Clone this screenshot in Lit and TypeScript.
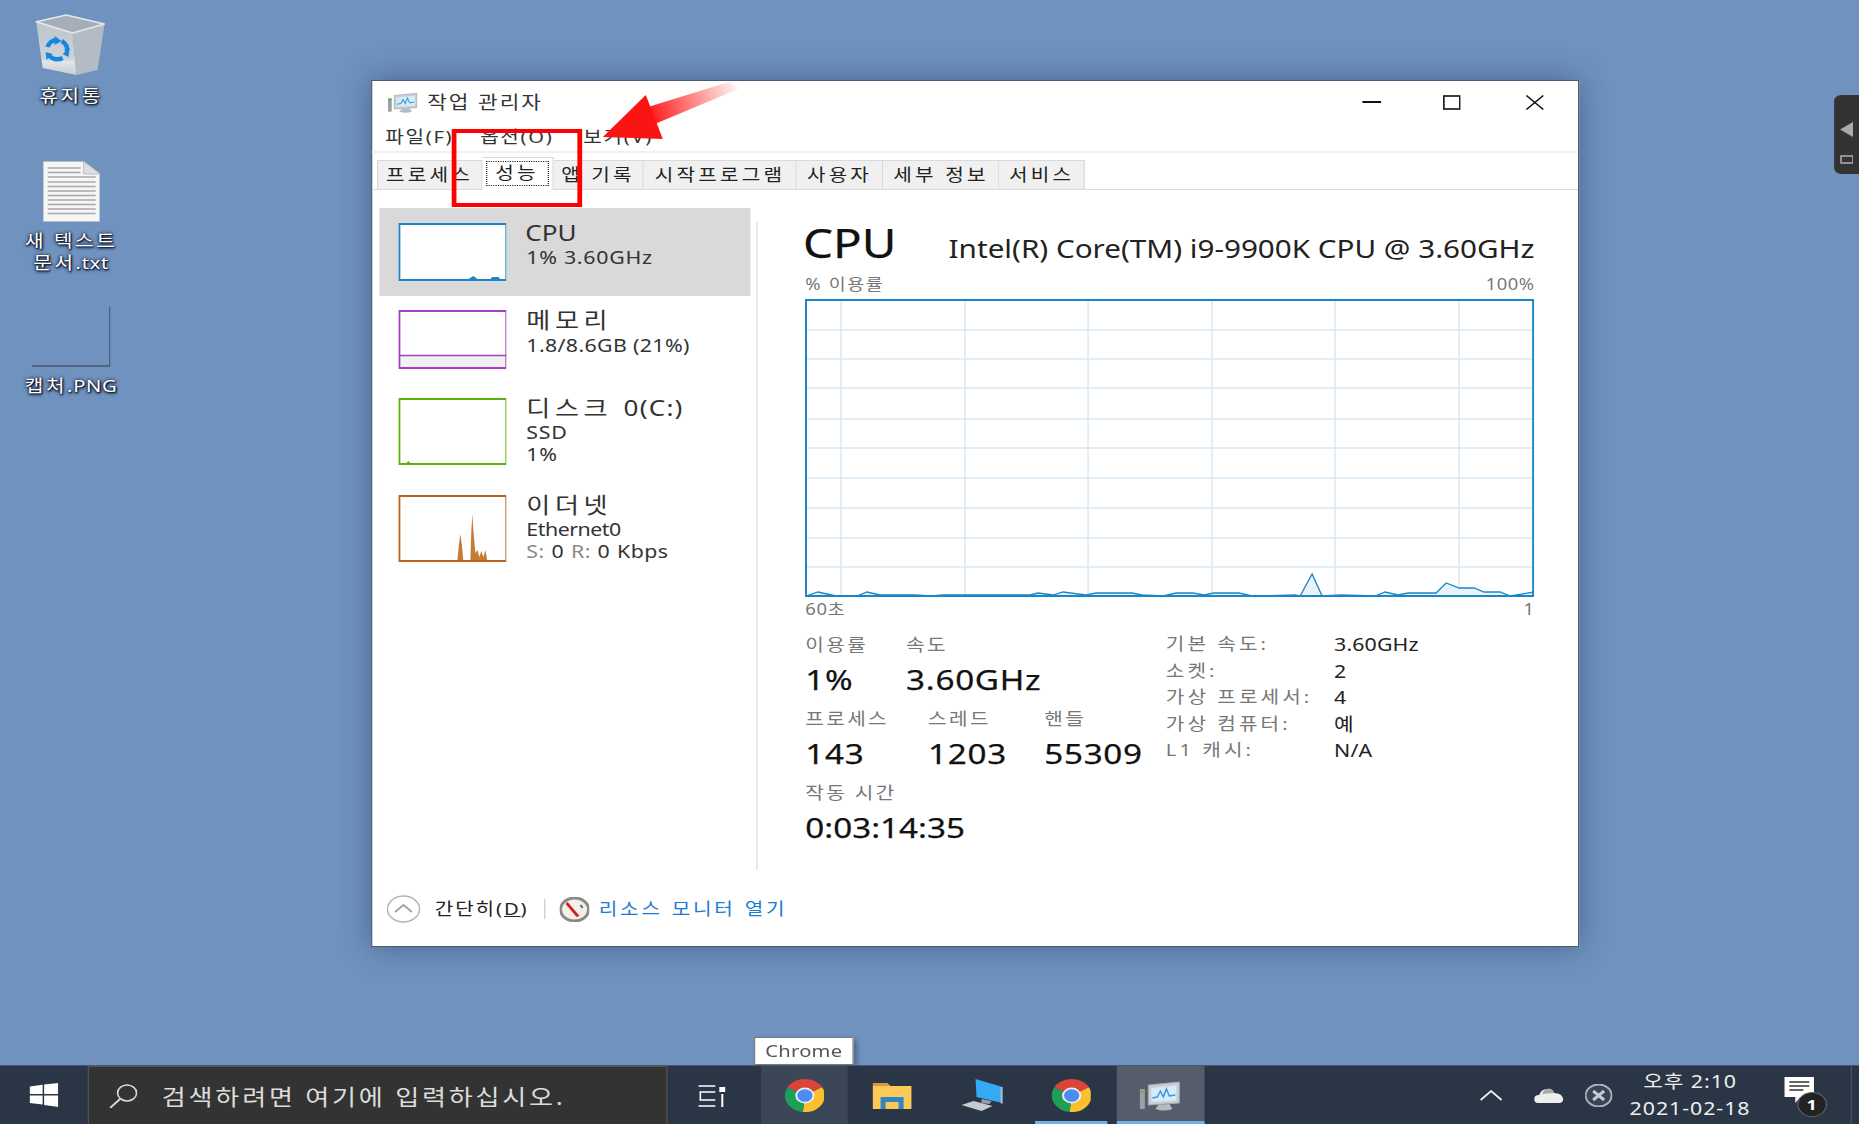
import { LitElement, html, css, svg } from "lit";
import { customElement } from "lit/decorators.js";

const K = 1859 / 1568;
const w = (real: number) => real / K;

const TABS = [
  { t: "프로세스", w: 88.5 },
  { t: "성능", w: 60, sel: true },
  { t: "앱 기록", w: 76.8 },
  { t: "시작프로그램", w: 129 },
  { t: "사용자", w: 72.6 },
  { t: "세부 정보", w: 98.5 },
  { t: "서비스", w: 71.5 },
];

const GRID_H = [330, 359, 388, 419, 448, 478, 508, 538, 567];
const GRID_V = [841, 965, 1088, 1212, 1335, 1459];
const CPU_PTS: [number, number][] = [
  [806, 596],[818, 592],[836, 596],[857, 596],[867, 592],[880, 595],[915, 595],[931, 596],[943, 595],
  [1030, 595],[1038, 593],[1053, 595],[1063, 592],[1086, 595],[1096, 593],[1132, 593],[1142, 595],
  [1163, 596],[1176, 593],[1193, 593],[1204, 595],[1214, 593],[1239, 593],[1252, 596],[1295, 595],
  [1300, 596],[1312, 574],[1322, 596],[1341, 595],[1375, 596],[1385, 592],[1398, 595],[1408, 593],
  [1436, 593],[1446, 583],[1459, 588],[1474, 588],[1484, 592],[1500, 592],[1510, 596],[1534, 592],
];
const ptStr = CPU_PTS.map((p) => p.join(",")).join(" ");

const chrome = () => svg`
  <path d="M20 20 L2.7 10 A20 20 0 0 1 37.3 10 Z" fill="#db4437"/>
  <path d="M20 20 L37.3 10 A20 20 0 0 1 18 40 Z" fill="#fbc02d"/>
  <path d="M20 20 L18 40 A20 20 0 0 1 2.7 10 Z" fill="#1e9e57"/>
  <circle cx="20" cy="20" r="9.6" fill="#e8eef8"/>
  <circle cx="20" cy="20" r="7.6" fill="#4d8bf0"/>`;

const monitor = () => svg`
  <rect x="0.5" y="9" width="5" height="20" fill="#9aa0a6"/>
  <rect x="1" y="10.5" width="4" height="2.5" fill="#6ab04c"/>
  <path d="M9 5 L40 2 L40 23 L9 25 Z" fill="#c9ced3" stroke="#a2a8ae" stroke-width="1"/>
  <path d="M12 8 L37 5.5 L37 20.5 L12 22 Z" fill="#d3ebfa"/>
  <path d="M13 18 L18 17 L21 11 L24 17 L27 9 L30 16 L36 15" fill="none" stroke="#3d93d6" stroke-width="1.4"/>
  <path d="M19 25 L30 24 L33 29 Q25 32 16 29 Z" fill="#b6bbc0"/>`;

@customElement("app-root")
export class AppRoot extends LitElement {
  static styles = css`
    :host {
      display: block;
      width: 1568px;
      height: 1124px;
      overflow: hidden;
      transform: scaleX(1.18559);
      transform-origin: 0 0;
      filter: blur(0.35px);
      font-family: "Noto Sans", "Noto Sans CJK KR", sans-serif;
      color: #1a1a1a;
    }
    svg { display: block; flex: none; }
    .stage { display: flex; flex-direction: column; width: 1568px; height: 1124px; }
    .desktop { position: relative; flex: 1; background: #6f92be; }

    .icons {
      position: absolute; left: 0; top: 14px; width: 120px;
      display: flex; flex-direction: column;
    }
    .dicon { height: 146.5px; display: flex; flex-direction: column; align-items: center; }
    .dlabel {
      margin-top: 8px; font-size: 17px; line-height: 22.5px; letter-spacing: 2.2px;
      color: #fff; text-align: center; white-space: nowrap;
      text-shadow: 1px 1px 1.5px #0c1424, 0 0 3px #101a30, 0 1px 3px #101a30;
    }
    .dlabel.top { margin-top: 9px; }
    .dlabel span { letter-spacing: 0.6px; }

    .window {
      position: absolute; left: 313px; top: 80px; width: 1019px; height: 867px;
      box-sizing: border-box; border: 1px solid #4a5a72; background: #fff;
      box-shadow: 0 0 26px rgba(25, 45, 80, 0.45);
      display: flex; flex-direction: column;
    }
    .titlebar { height: 42px; display: flex; align-items: center; padding-left: 12.5px; }
    .wtitle { margin-left: 8.5px; font-size: 18px; line-height: 24px; letter-spacing: 1.7px; color: #333; }
    .controls { margin-left: auto; padding-right: 28.5px; display: flex; align-items: center; }
    .controls .mx { margin: 0 55px 0 52.5px; }

    .menubar {
      height: 28px; border-bottom: 2px solid #f0f0f0; padding-left: 11px;
      display: grid; grid-template-columns: 80px 87px auto; align-items: center;
      font-size: 17px; letter-spacing: 1.4px; line-height: 24px; color: #333;
    }

    .tabs {
      height: 36px; border-bottom: 1px solid #d9d9d9; padding: 0 0 0 4px;
      display: flex; align-items: flex-end;
    }
    .tab {
      box-sizing: border-box; height: 29px; background: #f0f0f0;
      border: 1px solid #d9d9d9; border-left-width: 0; border-bottom: none;
      display: flex; align-items: center; justify-content: center;
      font-size: 17px; line-height: 22px; letter-spacing: 2.7px; color: #222; white-space: nowrap;
    }
    .tab:first-child { border-left-width: 1px; }
    .tab.sel { height: 33px; background: #fff; margin-bottom: -1px; position: relative; }
    .tab.sel span { border: 1px dotted #222; box-sizing: border-box; width: 53px; height: 25px; margin-top: -1px; text-align: center; }

    .body { flex: 1; display: flex; min-height: 0; }
    .side { margin: 18px 0 0 6px; width: 312.6px; flex: none; }
    .row { display: flex; padding: 9px 0 0 15.5px; gap: 16.5px; box-sizing: border-box; }
    .row.on { background: #d9d9d9; }
    .row.h88 { height: 88px; }
    .row.h97 { height: 97px; }
    .row.first { padding-top: 10px; }
    .thumb { margin-top: 5px; }
    .rt { font-size: 22px; line-height: 28px; letter-spacing: 3.9px; color: #333; white-space: nowrap; }
    .rt.lat { letter-spacing: 0; margin-left: -1px; }
    .rt span { letter-spacing: 1px; }
    .rs { font-size: 18px; line-height: 22px; letter-spacing: 0.6px; color: #333; white-space: nowrap; }
    .rs.mem { margin-top: 1px; letter-spacing: 0.3px; }
    .rs.eth { letter-spacing: -0.4px; }
    .rs.rate { word-spacing: 0.6px; letter-spacing: 0.4px; }
    .gray { color: #8a8a8a; }

    .divider { margin: 32px 0 2px 5px; width: 1.7px; background: #d9d9d9; flex: none; }
    .main { padding: 29px 0 0 40px; width: 615px; flex: none; }
    .head { height: 48px; display: flex; align-items: baseline; justify-content: space-between; }
    .big { font-size: 40px; line-height: 48px; color: #111; margin-left: -2px; -webkit-text-stroke: 0.25px #111; }
    .model { font-size: 25px; line-height: 48px; letter-spacing: 0; color: #222; white-space: nowrap; }
    .caps {
      display: flex; justify-content: space-between; height: 20px; margin-top: 7px;
      font-size: 15.5px; line-height: 20px; letter-spacing: 1.4px; color: #777;
    }
    .caps span:last-child { letter-spacing: 0.4px; }
    .graph { margin-top: 5px; }
    .caps.under { margin-top: 2px; letter-spacing: 0.6px; }

    .stats { margin-top: 15px; display: flex; }
    .left { width: 304px; flex: none; display: flex; flex-direction: column; gap: 11px; }
    .srow { display: grid; }
    .srow.a { grid-template-columns: 85px auto; }
    .srow.b { grid-template-columns: 103.5px 98px auto; }
    .lab { font-size: 17px; line-height: 22px; letter-spacing: 2px; color: #777; white-space: nowrap; }
    .val { margin-top: 5px; font-size: 28px; line-height: 36px; letter-spacing: 0.6px; color: #111; white-space: nowrap; -webkit-text-stroke: 0.25px #111; }
    .val.up { letter-spacing: 0; }
    .specs { margin: -3px 0 0 0; display: grid; grid-template-columns: 142px auto; grid-auto-rows: 26.5px; align-items: center; }
    .specs dt { font-size: 17px; line-height: 24px; letter-spacing: 2.6px; color: #777; white-space: nowrap; }
    .specs dd { margin: 0; font-size: 18px; line-height: 24px; letter-spacing: 0.1px; color: #222; }

    .footer { height: 74px; display: flex; align-items: center; padding-left: 12px; flex: none; }
    .less { margin-left: 12px; font-size: 17px; line-height: 24px; letter-spacing: 1.6px; color: #222; white-space: nowrap; }
    .less u { text-decoration: underline; }
    .vsep { width: 1.5px; height: 20px; background: #c8c8c8; margin: 0 11.5px 0 13px; }
    .link { margin-left: 8px; font-size: 17px; line-height: 24px; letter-spacing: 2.3px; word-spacing: 1px; color: #1a7ad4; white-space: nowrap; }

    .redbox {
      position: absolute; left: 381px; top: 129px; width: 110px; height: 78px;
      box-sizing: border-box; border: 4.6px solid #f00;
    }
    .arrow { position: absolute; left: 500px; top: 70px; overflow: visible; }
    .tooltip {
      position: absolute; left: 636px; top: 1037px; width: 84px; height: 28px;
      box-sizing: border-box; background: #fff; border: 1.5px solid #7a7a7a;
      box-shadow: 3px 3px 5px rgba(20, 30, 50, 0.45);
      display: flex; align-items: center; justify-content: center;
      font-size: 17px; line-height: 22px; letter-spacing: 0.2px; color: #555;
    }
    .widget {
      position: absolute; right: 0; top: 95px; width: 21px; height: 79px;
      background: #333; border-radius: 6px 0 0 6px;
      display: flex; flex-direction: column; align-items: center; gap: 18px; padding-top: 27px; box-sizing: border-box;
    }

    .taskbar { height: 59px; flex: none; background: #2a3646; display: flex; align-items: stretch; position: relative; border-top: 1px solid #47566b; box-sizing: border-box; }
    .start { width: 74px; display: flex; align-items: center; padding: 0 0 0 24.5px; box-sizing: border-box; }
    .search {
      width: 488.5px; box-sizing: border-box; background: #333; border: 1px solid #555; border-bottom: none;
      display: flex; align-items: center; padding-left: 17px;
    }
    .ph { margin-left: 20px; font-size: 22px; line-height: 30px; letter-spacing: 2.35px; color: #dcdcdc; white-space: nowrap; }
    .tb { display: flex; align-items: center; justify-content: center; box-sizing: border-box; flex: none; position: relative; }
    .tb.view { width: 79.5px; padding-right: 4px; }
    .tb.hover { background: #3b4757; width: 73px; }
    .tb.s1 { width: 75px; }
    .tb.s2 { width: 77px; }
    .tb.s3 { width: 6px; }
    .tb.s4 { width: 61px; }
    .tb.s5 { width: 8px; }
    .tb.s6 { width: 73.5px; }
    .tb.run::after { content: ""; position: absolute; left: 0; right: 0; bottom: 0; height: 3px; background: #6fb0e8; }
    .tb.active { background: #555d6c; }
    .tray { margin-left: auto; display: flex; align-items: center; }
    .tray .caret { margin-right: 27px; }
    .tray .cloud { margin-right: 18px; }
    .tray .xc { margin-right: 6px; }
    .clock { width: 120px; text-align: center; color: #eee; white-space: nowrap; }
    .clock div { font-size: 18px; line-height: 27px; letter-spacing: 0.8px; }
    .note { position: relative; width: 31px; height: 40px; margin: 4px 0 0 19px; }
    .badge {
      position: absolute; left: 11px; top: 15px; width: 25px; height: 25px; border-radius: 50%;
      box-sizing: border-box; background: #222; border: 1.5px solid #666;
      color: #fff; font-size: 15px; font-weight: 700; line-height: 22px; text-align: center;
    }
    .edge { width: 1.5px; height: 58px; background: #47566b; margin-left: 25px; margin-right: 1px; }
    .tail { width: 5px; }
  `;

  private thumb(color: string, h: number, inner: unknown) {
    return html`<svg class="thumb" width=${w(109)} height=${h} viewBox="0 0 109 ${h}" preserveAspectRatio="none">
      <rect x="0" y="0" width="109" height=${h} fill="#fff"/>
      ${inner}
      <rect x="1" y="1" width="107" height=${h - 2} fill="none" stroke=${color} stroke-width="2"/>
    </svg>`;
  }

  render() {
    return html`<div class="stage">
      <div class="desktop">
        <div class="icons">
          <div class="dicon">
            <svg width=${w(70)} height="62" viewBox="0 0 70 62" preserveAspectRatio="none">
              <defs><linearGradient id="bin" x1="0" y1="0" x2="0" y2="1">
                <stop offset="0" stop-color="#bcc4cd"/><stop offset="0.7" stop-color="#cdd3d9"/><stop offset="0.75" stop-color="#e2e5e9"/><stop offset="1" stop-color="#c8cdd2"/>
              </linearGradient></defs>
              <path d="M0.7 7.7 L37 19 L41 61 L7 54 Z" fill="url(#bin)"/>
              <path d="M37 19 L69 10 L62 56 L41 61 Z" fill="#b4bbc4"/>
              <path d="M0.7 7.7 L30.7 1 L69 10 L37 19 Z" fill="#a5aeb9" stroke="#e6e9ec" stroke-width="1.6"/>
              <g fill="none" stroke="#1687e0" stroke-width="4.5">
                <path d="M12 33 A10 9 0 0 1 21 26"/>
                <path d="M26 27 A10 9 0 0 1 31 38"/>
                <path d="M27 44 A10 9 0 0 1 14 42"/>
              </g>
              <path d="M19 22 L26 27 L19 31 Z M34 34 L33 43 L27 40 Z M11 46 L10 38 L17 40 Z" fill="#1687e0"/>
            </svg>
            <div class="dlabel top">휴지통</div>
          </div>
          <div class="dicon">
            <svg width=${w(58)} height="61" viewBox="0 0 58 61" preserveAspectRatio="none">
              <path d="M0.5 0.5 L41 0.5 L57.5 13 L57.5 60.5 L0.5 60.5 Z" fill="#f6f6f6" stroke="#b9bec4"/>
              <path d="M41 0.5 L41 13 L57.5 13 Z" fill="#dcdfe3" stroke="#b9bec4"/>
              ${[7, 11.5, 16, 21, 25.5, 30, 34.5, 39, 43.5, 48, 52.5].map(
                (y, i) => svg`<line x1="5" x2=${i < 2 ? 38 : 53} y1=${y} y2=${y} stroke="#a8a8a8" stroke-width="1.5"/>`
              )}
            </svg>
            <div class="dlabel">새 텍스트<br />문서<span>.txt</span></div>
          </div>
          <div class="dicon">
            <svg width=${w(79)} height="60" viewBox="0 0 79 60" preserveAspectRatio="none">
              <path d="M78 0 L78 59 L0 59" fill="none" stroke="#46586f" stroke-width="1.6"/>
            </svg>
            <div class="dlabel">캡처<span>.PNG</span></div>
          </div>
        </div>

        <div class="window">
          <div class="titlebar">
            <svg width=${w(30)} height="21" viewBox="0 0 41 31" preserveAspectRatio="none">${monitor()}</svg>
            <span class="wtitle">작업 관리자</span>
            <div class="controls">
              <svg width=${w(19)} height="2" viewBox="0 0 19 2" preserveAspectRatio="none"><rect width="19" height="2" fill="#111"/></svg>
              <svg class="mx" width=${w(18)} height="15" viewBox="0 0 18 15" preserveAspectRatio="none"><rect x="1" y="1" width="16" height="13" fill="none" stroke="#111" stroke-width="1.6"/></svg>
              <svg width=${w(18)} height="15" viewBox="0 0 18 15" preserveAspectRatio="none"><path d="M0.5 0.5 L17.5 14.5 M17.5 0.5 L0.5 14.5" stroke="#111" stroke-width="1.5"/></svg>
            </div>
          </div>
          <div class="menubar"><span>파일(F)</span><span>옵션(O)</span><span>보기(V)</span></div>
          <div class="tabs">
            ${TABS.map(
              (t) => html`<div class="tab ${t.sel ? "sel" : ""}" style="width:${t.w}px"><span>${t.t}</span></div>`
            )}
          </div>
          <div class="body">
            <div class="side">
              <div class="row on first h88">
                ${this.thumb("#1a86c8", 58, svg`<path d="M70 56 L75 53 L79 56 Z M92 56 L94 54 L100 54 L102 56 Z" fill="#1a86c8"/>`)}
                <div><div class="rt lat">CPU</div><div class="rs">1% 3.60GHz</div></div>
              </div>
              <div class="row h88">
                ${this.thumb("#a63ec4", 59, svg`<rect x="1" y="45" width="107" height="13" fill="#f1f1f1"/><line x1="1" x2="108" y1="45.5" y2="45.5" stroke="#a63ec4" stroke-width="1.6"/>`)}
                <div><div class="rt">메모리</div><div class="rs mem">1.8/8.6GB (21%)</div></div>
              </div>
              <div class="row h97">
                ${this.thumb("#5ab00f", 67, svg`<path d="M8 65 L10 63 L12 65 Z" fill="#5ab00f"/>`)}
                <div><div class="rt">디스크 <span>0(C:)</span></div><div class="rs">SSD</div><div class="rs">1%</div></div>
              </div>
              <div class="row h97">
                ${this.thumb("#b5651d", 67, svg`<path d="M59 66 L60.5 50 L62 39 L63.5 50 L65 66 Z M72 66 L73 35 L74 19 L75 35 L77 58 L79 55 L81 62 L83 56 L85 62 L87 55 L89 66 Z" fill="#c77a34"/>`)}
                <div><div class="rt">이더넷</div><div class="rs eth">Ethernet0</div><div class="rs rate"><span class="gray">S:</span> 0 <span class="gray">R:</span> 0 Kbps</div></div>
              </div>
            </div>
            <div class="divider"></div>
            <div class="main">
              <div class="head"><span class="big">CPU</span><span class="model">Intel(R) Core(TM) i9-9900K CPU @ 3.60GHz</span></div>
              <div class="caps"><span>% 이용률</span><span>100%</span></div>
              <svg class="graph" width="615" height="298" viewBox="805 299 729 298" preserveAspectRatio="none">
                <rect x="805" y="299" width="729" height="298" fill="#fff"/>
                ${GRID_H.map((y) => svg`<line x1="806" x2="1533" y1=${y} y2=${y} stroke="#d9e9f4" stroke-width="1.5"/>`)}
                ${GRID_V.map((x) => svg`<line x1=${x} x2=${x} y1="300" y2="596" stroke="#d9e9f4" stroke-width="1.5"/>`)}
                <polygon points="806,597 ${ptStr} 1534,597" fill="#e8f3fa"/>
                <polyline points=${ptStr} fill="none" stroke="#1a86c8" stroke-width="1.3"/>
                <rect x="806" y="300" width="727" height="296" fill="none" stroke="#1a86c8" stroke-width="2"/>
              </svg>
              <div class="caps under"><span>60초</span><span>1</span></div>
              <div class="stats">
                <div class="left">
                  <div class="srow a">
                    <div><div class="lab">이용률</div><div class="val">1%</div></div>
                    <div><div class="lab">속도</div><div class="val">3.60GHz</div></div>
                  </div>
                  <div class="srow b">
                    <div><div class="lab">프로세스</div><div class="val">143</div></div>
                    <div><div class="lab">스레드</div><div class="val">1203</div></div>
                    <div><div class="lab">핸들</div><div class="val">55309</div></div>
                  </div>
                  <div class="srow">
                    <div><div class="lab">작동 시간</div><div class="val up">0:03:14:35</div></div>
                  </div>
                </div>
                <dl class="specs">
                  <dt>기본 속도:</dt><dd>3.60GHz</dd>
                  <dt>소켓:</dt><dd>2</dd>
                  <dt>가상 프로세서:</dt><dd>4</dd>
                  <dt>가상 컴퓨터:</dt><dd>예</dd>
                  <dt>L1 캐시:</dt><dd>N/A</dd>
                </dl>
              </div>
            </div>
          </div>
          <div class="footer">
            <svg width=${w(34)} height="28" viewBox="0 0 36 28" preserveAspectRatio="none">
              <ellipse cx="18" cy="14" rx="17" ry="13" fill="#fff" stroke="#b5b5b5" stroke-width="1.5"/>
              <path d="M9 17 L18 10 L27 17" fill="none" stroke="#a0a0a0" stroke-width="1.8"/>
            </svg>
            <span class="less">간단히(<u>D</u>)</span>
            <div class="vsep"></div>
            <svg width=${w(30)} height="25" viewBox="0 0 30 25" preserveAspectRatio="none">
              <ellipse cx="15" cy="12.5" rx="14" ry="11.5" fill="#f3f0ea" stroke="#8a8a84" stroke-width="3"/>
              <path d="M8 5 L20 19 L17 20 L6 7 Z" fill="#d91c1c"/>
              <path d="M21 8 L23 11" stroke="#666" stroke-width="2"/>
            </svg>
            <span class="link">리소스 모니터 열기</span>
          </div>
        </div>

        <div class="redbox"></div>
        <svg class="arrow" width=${w(250)} height="80" viewBox="593 70 250 80" preserveAspectRatio="none">
          <defs><linearGradient id="sh" gradientUnits="userSpaceOnUse" x1="651" y1="115" x2="741" y2="85">
            <stop offset="0" stop-color="#ff1c1c"/><stop offset="1" stop-color="#ff1c1c" stop-opacity="0"/>
          </linearGradient></defs>
          <path d="M645 108 L729 82 L741 88 L655 124 Z" fill="url(#sh)"/>
          <path d="M603 137 L646 95 L663 139 Z" fill="#fb1414"/>
        </svg>

        <div class="tooltip">Chrome</div>
        <div class="widget">
          <svg width=${w(13)} height="15" viewBox="0 0 13 15" preserveAspectRatio="none"><path d="M0 7.5 L13 0 L13 15 Z" fill="#aaa"/></svg>
          <svg width=${w(14)} height="9" viewBox="0 0 14 9" preserveAspectRatio="none"><rect x="1" y="1" width="12" height="7" fill="none" stroke="#aaa" stroke-width="1.6"/></svg>
        </div>
      </div>

      <div class="taskbar">
        <div class="start">
          <svg width=${w(29)} height="24" viewBox="0 0 29 24" preserveAspectRatio="none">
            <path d="M0 3.5 L13 1.8 L13 11 L0 11 Z M14.5 1.6 L29 0 L29 11 L14.5 11 Z M0 12.5 L13 12.5 L13 21.5 L0 20 Z M14.5 12.5 L29 12.5 L29 24 L14.5 22 Z" fill="#fff"/>
          </svg>
        </div>
        <div class="search">
          <svg width=${w(29)} height="24" viewBox="0 0 29 24" preserveAspectRatio="none">
            <ellipse cx="18" cy="9" rx="9.5" ry="8" fill="none" stroke="#ddd" stroke-width="1.6"/>
            <path d="M11 15 L1 24" stroke="#ddd" stroke-width="1.8"/>
          </svg>
          <span class="ph">검색하려면 여기에 입력하십시오.</span>
        </div>
        <div class="tb view">
          <svg width=${w(27)} height="23" viewBox="0 0 27 23" preserveAspectRatio="none">
            <path d="M0 2 L17 2 M17 8 L2 8 L2 16 L17 16 M0 22 L17 22" fill="none" stroke="#fff" stroke-width="1.6"/>
            <rect x="21" y="3" width="6" height="5" fill="#fff"/>
            <rect x="23" y="10" width="2" height="13" fill="#fff"/>
          </svg>
        </div>
        <div class="tb hover">
          <svg width=${w(40)} height="33" viewBox="0 0 40 40" preserveAspectRatio="none">${chrome()}</svg>
        </div>
        <div class="tb s1">
          <svg width=${w(39)} height="27" viewBox="0 0 39 27" preserveAspectRatio="none">
            <path d="M0 1 L15 1 L19 5 L0 5 Z" fill="#d99a3a"/>
            <rect x="0" y="4" width="39" height="23" fill="#fcc858"/>
            <path d="M8 27 L8 15 L31 15 L31 27 L26 27 L26 20 L13 20 L13 27 Z" fill="#2f85c8"/>
          </svg>
        </div>
        <div class="tb s2">
          <svg width=${w(41)} height="32" viewBox="0 0 41 32" preserveAspectRatio="none">
            <path d="M14 0 L41 8 L41 24 L15 18 Z" fill="#34aaf5"/>
            <path d="M39 8 L41 8 L41 25 L39 24 Z" fill="#a8b8c6"/>
            <path d="M0 26 L12 22 L31 27 L20 32 Z" fill="#c8ccd0"/>
            <path d="M20 20 L30 22 L28 25 L20 24 Z" fill="#9aa0a8"/>
          </svg>
        </div>
        <div class="tb s3"></div>
        <div class="tb run s4">
          <svg width=${w(40)} height="33" viewBox="0 0 40 40" preserveAspectRatio="none">${chrome()}</svg>
        </div>
        <div class="tb s5"></div>
        <div class="tb active run s6">
          <svg width=${w(41)} height="31" viewBox="0 0 41 31" preserveAspectRatio="none">${monitor()}</svg>
        </div>
        <div class="tray">
          <svg class="caret" width=${w(23)} height="11" viewBox="0 0 23 11" preserveAspectRatio="none"><path d="M1 10 L11.5 1 L22 10" fill="none" stroke="#eee" stroke-width="1.8"/></svg>
          <svg class="cloud" width=${w(29)} height="16" viewBox="0 0 29 16" preserveAspectRatio="none"><path d="M4 16 Q0 16 0 12 Q0 8 5 8 Q7 2 13 2 Q18 1 20 6 Q28 6 29 12 Q29 16 25 16 Z" fill="#eee"/><path d="M8 7 Q10 2 13 2 Q18 1 20 6 Z" fill="#aaa"/></svg>
          <svg class="xc" width=${w(27)} height="23" viewBox="0 0 27 23" preserveAspectRatio="none"><ellipse cx="13.5" cy="11.5" rx="13" ry="11" fill="#3a4453" stroke="#aab2bc" stroke-width="2"/><path d="M8 7 L19 16 M19 7 L8 16" stroke="#c5cad0" stroke-width="3"/></svg>
          <div class="clock"><div>오후 2:10</div><div>2021-02-18</div></div>
          <div class="note">
            <svg width=${w(30)} height="26" viewBox="0 0 30 26" preserveAspectRatio="none">
              <path d="M0 0 L30 0 L30 20 L16 20 L11 26 L11 20 L0 20 Z" fill="#fff"/>
              <path d="M5 5 L25 5 M5 9 L25 9 M5 13 L19 13" stroke="#333" stroke-width="1.4"/>
            </svg>
            <div class="badge">1</div>
          </div>
          <div class="edge"></div>
          <div class="tail"></div>
        </div>
      </div>
    </div>`;
  }
}
